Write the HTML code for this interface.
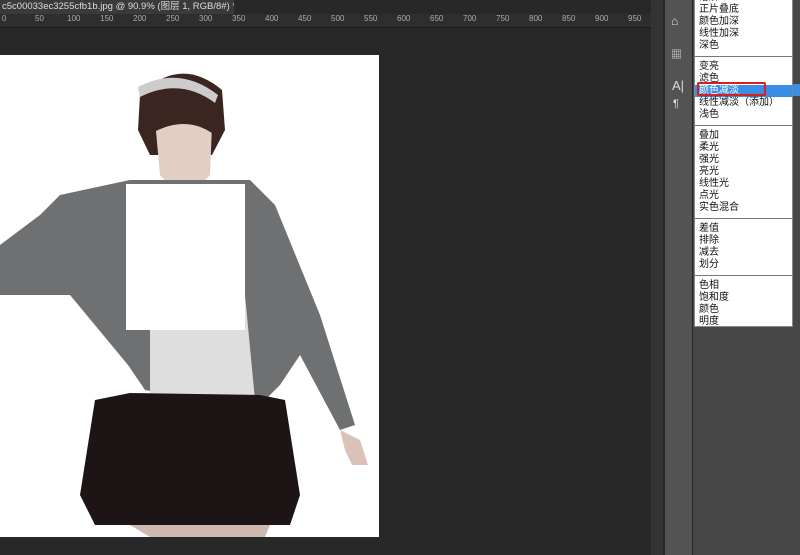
<!DOCTYPE html><html><head><meta charset="utf-8"><style>
body{margin:0;width:800px;height:555px;overflow:hidden;background:#282828;font-family:"Liberation Sans","Noto Sans CJK SC",sans-serif;position:relative}
.a{position:absolute}
.menu{left:694px;top:-9px;width:99px;height:336px;background:#fff;border:1px solid #888;box-sizing:border-box;font-size:10px;line-height:12px;color:#111}
.menu div{padding-left:4px;height:12px}
.menu hr{margin:4px 0 4px;border:0;border-top:1px solid #777}
</style></head><body>
<div class="a" style="left:0;top:0;width:232px;height:14px;background:#3a3a3a;color:#ddd;font-size:9.5px;line-height:14px;padding-left:2px;white-space:nowrap;overflow:hidden">c5c00033ec3255cfb1b.jpg @ 90.9% (图层 1, RGB/8#) * &nbsp;×</div>
<div class="a" style="left:0;top:14px;width:651px;height:13px;background:#2e2e2e;border-bottom:1px solid #1a1a1a;color:#aaa;font-size:8px;line-height:10px">
<span class="a" style="left:2px">0</span><span class="a" style="left:35px">50</span><span class="a" style="left:67px">100</span><span class="a" style="left:100px">150</span><span class="a" style="left:133px">200</span><span class="a" style="left:166px">250</span><span class="a" style="left:199px">300</span><span class="a" style="left:232px">350</span><span class="a" style="left:265px">400</span><span class="a" style="left:298px">450</span><span class="a" style="left:331px">500</span><span class="a" style="left:364px">550</span><span class="a" style="left:397px">600</span><span class="a" style="left:430px">650</span><span class="a" style="left:463px">700</span><span class="a" style="left:496px">750</span><span class="a" style="left:529px">800</span><span class="a" style="left:562px">850</span><span class="a" style="left:595px">900</span><span class="a" style="left:628px">950</span></div>
<div class="a" style="left:651px;top:0;width:12px;height:555px;background:#333"></div>
<div class="a" style="left:665px;top:0;width:27px;height:555px;background:#535353"></div>
<div class="a" style="left:693px;top:0;width:107px;height:555px;background:#474747"></div>
<div class="a" style="left:671px;top:14px;color:#ddd;font-size:12px">⌂</div>
<div class="a" style="left:671px;top:46px;color:#ddd;font-size:11px">▦</div>
<div class="a" style="left:672px;top:78px;color:#ddd;font-size:13px">A|</div>
<div class="a" style="left:673px;top:98px;color:#ddd;font-size:11px">¶</div>
<svg class="a" style="left:0;top:55px" width="379" height="482">
<rect width="379" height="482" fill="#fff"/>
<path d="M140 40 Q180 0 222 35 L225 75 L212 100 L150 100 L138 75Z" fill="#3a2520"/>
<path d="M138 32 Q180 10 218 40 L215 48 Q180 22 140 42Z" fill="#ccc"/>
<path d="M155 65 Q185 55 212 70 L210 120 Q185 150 160 120Z" fill="#e2cfc4"/>
<path d="M150 45 Q185 40 215 60 L212 78 Q185 60 152 78Z" fill="#3a2520"/>
<path d="M60 140 L130 125 L250 125 L275 150 L320 260 L355 370 L340 375 L300 300 L280 330 L265 345 L200 345 L145 335 L128 310 L70 240 L10 240 L0 240 L0 190 L40 160Z" fill="#6e7072"/>
<path d="M150 240 L245 240 L255 345 L150 340Z" fill="#dedede"/>
<path d="M95 345 L130 338 L260 340 L285 345 L300 440 L290 470 L95 470 L80 440Z" fill="#1d1416"/>
<path d="M130 470 L150 482 L265 482 L270 470Z" fill="#cdb9b0"/>
<path d="M340 375 L360 385 L368 410 L352 410 L345 395Z" fill="#d9c2b8"/>
<rect x="126" y="129" width="119" height="146" fill="#fff"/>
</svg>
<div class="a" style="left:694px;top:84px;width:106px;height:12px;background:#3a8ee6"></div>
<div class="a menu">
<div>溶解</div><div>正片叠底</div><div>颜色加深</div><div>线性加深</div><div>深色</div><hr>
<div>变亮</div><div>滤色</div><div style="background:#3a8ee6;color:#fff">颜色减淡</div><div>线性减淡（添加）</div><div>浅色</div><hr>
<div>叠加</div><div>柔光</div><div>强光</div><div>亮光</div><div>线性光</div><div>点光</div><div>实色混合</div><hr>
<div>差值</div><div>排除</div><div>减去</div><div>划分</div><hr>
<div>色相</div><div>饱和度</div><div>颜色</div><div>明度</div>
</div>
<div class="a" style="left:697px;top:82px;width:69px;height:14px;border:2px solid #d62020;border-radius:2px;box-sizing:border-box;z-index:3"></div>
</body></html>
